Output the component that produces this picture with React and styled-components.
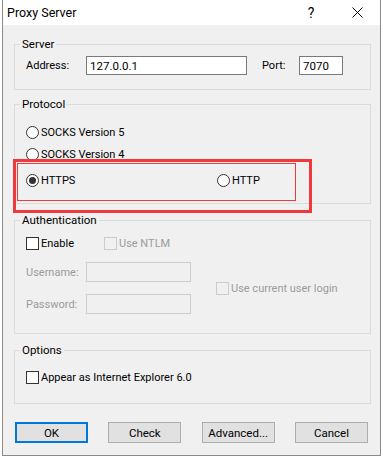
import React from 'react';
import styled, { createGlobalStyle, css } from 'styled-components';

const Global = createGlobalStyle`
  html, body { margin: 0; padding: 0; background: #ffffff; }
  body {
    width: 383px; height: 458px; overflow: hidden;
    font-family: Roboto, "Noto Sans", sans-serif;
    font-size: 11px; color: #000;
  }
  * { box-sizing: border-box; }
`;

const Dialog = styled.div`
  position: relative;
  margin-left: 2px;
  width: 379px;
  height: 456px;
  border: 1px solid #8a8a8a;
  border-top: none;
  background: #f0f0f0;
  display: flex;
  flex-direction: column;
`;

const TitleBar = styled.div`
  height: 25px;
  flex: 0 0 25px;
  background: #ffffff;
  display: flex;
  align-items: center;
  padding-left: 4px;
`;

const Title = styled.div`
  flex: 1;
  font-size: 12.5px;
  line-height: 25px;
`;

const CaptionButton = styled.div`
  width: 46px;
  height: 25px;
  display: flex;
  align-items: center;
  justify-content: center;
  font-size: 14px;
`;

const Body = styled.div`
  flex: 1;
  display: flex;
  flex-direction: column;
  padding: 0 9px 12px 11px;
`;

const Group = styled.fieldset`
  margin: ${p => p.$mt}px 0 0 0;
  padding: 0;
  border: 1px solid #dcdcdc;
  min-width: 0;
`;

const Legend = styled.legend`
  margin-left: 5px;
  padding: 0 2px;
  font-size: 11.5px;
  line-height: 15px;
  height: 15px;
`;

const GroupInner = styled.div`
  padding: ${p => p.$pad};
  display: flex;
  flex-direction: column;
`;

const Row = styled.div`
  display: flex;
  align-items: center;
  height: ${p => p.$h || 20}px;
  margin-top: ${p => p.$mt || 0}px;
`;

const FieldLabel = styled.span`
  width: ${p => p.$w}px;
  flex: 0 0 ${p => p.$w}px;
  margin-left: ${p => p.$ml || 0}px;
  color: ${p => (p.$disabled ? '#9b9b9b' : '#000')};
`;

const TextBox = styled.input`
  width: ${p => p.$w}px;
  height: ${p => p.$h}px;
  border: 1px solid ${p => (p.disabled ? '#cccccc' : '#7a7a7a')};
  background: ${p => (p.disabled ? '#f0f0f0' : '#ffffff')};
  padding: 0 3px;
  margin: 0;
  font: inherit;
  font-size: 11.5px;
  color: #000;
  outline: none;
`;

const Option = styled.label`
  display: flex;
  align-items: center;
  gap: 2px;
  width: ${p => (p.$w ? `${p.$w}px` : 'auto')};
  flex: 0 0 auto;
  color: ${p => (p.$disabled ? '#9b9b9b' : '#000')};
`;

const Radio = styled.span`
  position: relative;
  width: 13px;
  height: 13px;
  border-radius: 50%;
  border: 1px solid #333333;
  background: #ffffff;
  ${p => p.$checked && css`
    &::after {
      content: '';
      position: absolute;
      left: 2px; top: 2px;
      width: 7px; height: 7px;
      border-radius: 50%;
      background: #333333;
    }
  `}
`;

const Check = styled.span`
  width: 13px;
  height: 13px;
  border: 1px solid ${p => (p.$disabled ? '#cccccc' : '#333333')};
  background: ${p => (p.$disabled ? 'transparent' : '#ffffff')};
`;

const LoginGrid = styled.div`
  display: grid;
  grid-template-columns: 190px auto;
  grid-template-rows: 20px 20px;
  row-gap: 12px;
  margin-top: 9px;
`;

const GridCell = styled.div`
  display: flex;
  align-items: center;
  ${p => p.$span && css`grid-row: 1 / span 2; grid-column: 2;`}
`;

const ButtonRow = styled.div`
  margin-top: 18px;
  display: flex;
  justify-content: space-between;
  padding: 0 3px 0 1px;
`;

const Button = styled.button`
  width: 73px;
  height: 21px;
  margin: 0;
  padding: 0;
  background: #e1e1e1;
  border: ${p => (p.$default ? '2px solid #0078d7' : '1px solid #adadad')};
  font: inherit;
  font-size: 11.5px;
  color: #000;
`;

const Highlight = styled.div`
  position: absolute;
  left: ${p => p.$x}px;
  top: ${p => p.$y}px;
  width: ${p => p.$w}px;
  height: ${p => p.$h}px;
  border: ${p => p.$b}px solid #ee3a3d;
  pointer-events: none;
`;

export default function App() {
  return (
    <>
      <Global />
      <Dialog>
        <TitleBar>
          <Title>Proxy Server</Title>
          <CaptionButton>?</CaptionButton>
          <CaptionButton>
            <svg width="11" height="11" viewBox="0 0 11 11">
              <path d="M0.5 0.5 L10.5 10.5 M10.5 0.5 L0.5 10.5" stroke="#000" strokeWidth="1" fill="none" />
            </svg>
          </CaptionButton>
        </TitleBar>
        <Body>
          <Group $mt={12}>
            <Legend>Server</Legend>
            <GroupInner $pad="4px 0 14px 11px">
              <Row $h={19}>
                <FieldLabel $w={60}>Address:</FieldLabel>
                <TextBox $w={161} $h={19} value="127.0.0.1" readOnly />
                <FieldLabel $w={37} $ml={15}>Port:</FieldLabel>
                <TextBox $w={44} $h={19} value="7070" readOnly />
              </Row>
            </GroupInner>
          </Group>

          <Group $mt={7}>
            <Legend>Protocol</Legend>
            <GroupInner $pad="10px 0 13px 11px">
              <Row>
                <Option><Radio />SOCKS Version 5</Option>
              </Row>
              <Row $mt={2}>
                <Option><Radio />SOCKS Version 4</Option>
              </Row>
              <Row $mt={6}>
                <Option $w={191}><Radio $checked />HTTPS</Option>
                <Option><Radio />HTTP</Option>
              </Row>
            </GroupInner>
          </Group>

          <Group $mt={9}>
            <Legend>Authentication</Legend>
            <GroupInner $pad="5px 0 19px 11px">
              <Row>
                <Option $w={78}><Check />Enable</Option>
                <Option $disabled><Check $disabled />Use NTLM</Option>
              </Row>
              <LoginGrid>
                <GridCell>
                  <FieldLabel $w={60} $disabled>Username:</FieldLabel>
                  <TextBox $w={105} $h={20} disabled />
                </GridCell>
                <GridCell $span>
                  <Option $disabled><Check $disabled />Use current user login</Option>
                </GridCell>
                <GridCell>
                  <FieldLabel $w={60} $disabled>Password:</FieldLabel>
                  <TextBox $w={105} $h={20} disabled />
                </GridCell>
              </LoginGrid>
            </GroupInner>
          </Group>

          <Group $mt={9}>
            <Legend>Options</Legend>
            <GroupInner $pad="9px 0 16px 11px">
              <Row>
                <Option><Check />Appear as Internet Explorer 6.0</Option>
              </Row>
            </GroupInner>
          </Group>

          <ButtonRow>
            <Button $default>OK</Button>
            <Button>Check</Button>
            <Button>Advanced...</Button>
            <Button>Cancel</Button>
          </ButtonRow>
        </Body>
        <Highlight $x={10} $y={159} $w={299} $h={54} $b={3} />
        <Highlight $x={14} $y={163} $w={279} $h={38} $b={1} />
      </Dialog>
    </>
  );
}
